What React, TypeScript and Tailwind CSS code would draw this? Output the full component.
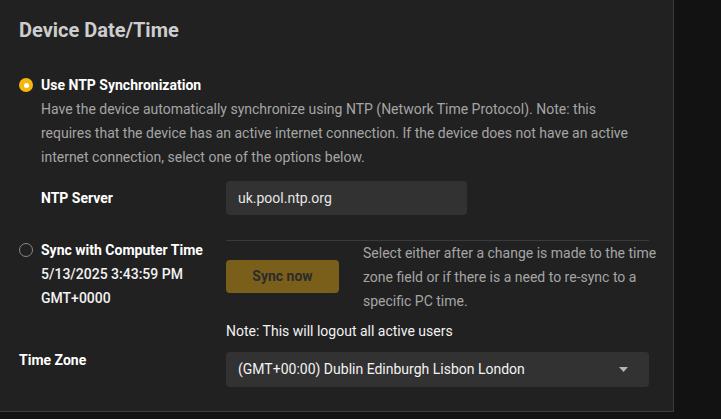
import React from 'react'

const Radio = ({ checked }: { checked?: boolean }) =>
  checked ? (
    <span className="w-[14px] h-[14px] rounded-full bg-[#f6b60e] flex items-center justify-center shrink-0">
      <span className="w-[5px] h-[5px] rounded-full bg-white" />
    </span>
  ) : (
    <span className="w-[14px] h-[14px] rounded-full border-[1.5px] border-[#8a8a8a] shrink-0" />
  )

export default function App() {
  return (
    <div className="w-[721px] h-[419px] bg-[#121212] font-['Roboto','Liberation_Sans',sans-serif] text-[14px]">
      <div className="w-[674px] h-[412px] bg-[#212121] border-r border-b border-[#3c3c3c] pl-[19px] pt-[16px]">
        <h1 className="text-[20px] leading-7 font-bold text-[#cdcdcd]">Device Date/Time</h1>

        {/* NTP */}
        <div className="mt-[29px] flex items-center gap-2 leading-6">
          <Radio checked />
          <span className="font-bold text-white">Use NTP Synchronization</span>
        </div>
        <p className="pl-[22px] pr-[40px] leading-6 text-[#a5a5a5]">
          Have the device automatically synchronize using NTP (Network Time Protocol). Note: this
          requires that the device has an active internet connection. If the device does not have an active
          internet connection, select one of the options below.
        </p>

        <div className="mt-[12px] flex items-center">
          <div className="w-[207px] pl-[22px] font-bold text-white">NTP Server</div>
          <div className="w-[241px] h-[34px] rounded bg-[#323232] flex items-center px-3 text-[#e6e6e6]">
            uk.pool.ntp.org
          </div>
        </div>

        {/* Computer time */}
        <div className="mt-[25px] flex">
          <div className="w-[207px] -mt-[2px] leading-6">
            <div className="flex items-center gap-2">
              <Radio />
              <span className="font-bold text-white">Sync with Computer Time</span>
            </div>
            <div className="pl-[22px] font-medium text-[#f2f2f2]">5/13/2025 3:43:59 PM</div>
            <div className="pl-[22px] font-medium text-[#f2f2f2]">GMT+0000</div>
          </div>
          <div className="w-[423px] border-t border-[#3a3a3a] flex">
            <button className="mt-[19px] w-[113px] h-[33px] rounded bg-[#7a5f1b] font-bold text-[#2b2b2b] shrink-0">
              Sync now
            </button>
            <p className="ml-6 w-[300px] shrink-0 leading-6 text-[#a5a5a5]">
              Select either after a change is made to the time zone field or if there is a need to re-sync to a
              specific PC time.
            </p>
          </div>
        </div>

        <div className="mt-[6px] pl-[207px] leading-6 text-[#f2f2f2]">Note: This will logout all active users</div>

        {/* Time zone */}
        <div className="mt-[9px] flex items-start">
          <div className="w-[207px] leading-4 font-bold text-white">Time Zone</div>
          <div className="w-[423px] h-[35px] rounded bg-[#323232] flex items-center justify-between pl-3 pr-[21px] text-[#f2f2f2]">
            <span>(GMT+00:00) Dublin Edinburgh Lisbon London</span>
            <svg width="9" height="5" viewBox="0 0 9 5">
              <path d="M0 0h9L4.5 5z" fill="#b5b5b5" />
            </svg>
          </div>
        </div>
      </div>
    </div>
  )
}
